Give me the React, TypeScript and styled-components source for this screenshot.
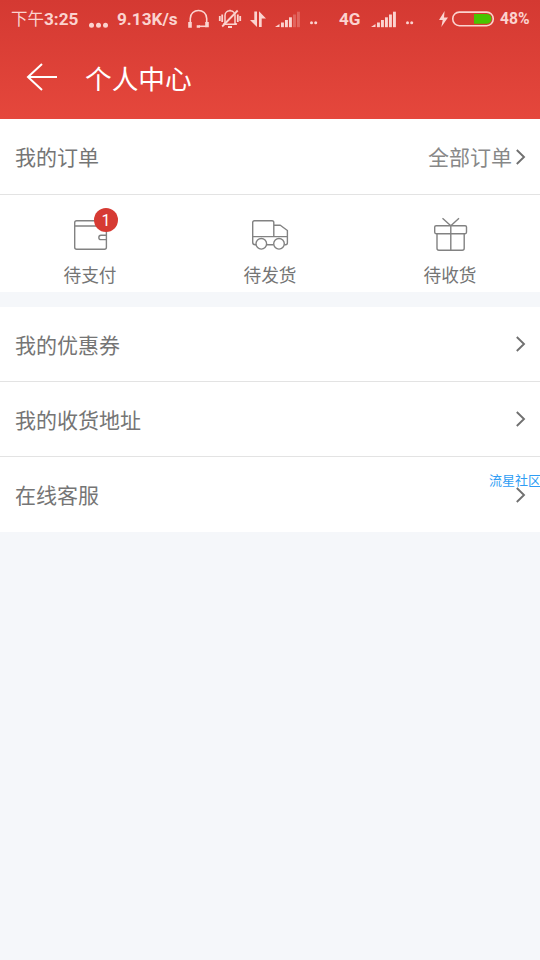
import React from 'react';
import styled, { createGlobalStyle } from 'styled-components';

const GlobalStyle = createGlobalStyle`
  * { box-sizing: border-box; }
  body {
    margin: 0;
    background: #f5f7fa;
    font-family: Roboto, "Noto Sans CJK SC", sans-serif;
    color: #757575;
  }
  svg { display: block; flex: none; overflow: visible; }
`;

const Screen = styled.div`
  width: 540px;
  min-height: 960px;
  display: flex;
  flex-direction: column;
  background: #f5f7fa;
`;

const Header = styled.header`
  height: 119px;
  color: #fff;
  background: linear-gradient(#d43932, #e5473c);
`;

const StatusBar = styled.div`
  height: 38px;
  display: flex;
  align-items: center;
  color: #fbd3cf;
`;

const StatusItem = styled.div<{ $gap: number; $width: number }>`
  flex: none;
  width: ${(p) => p.$width}px;
  margin-left: ${(p) => p.$gap}px;
  white-space: nowrap;
`;

const StatusText = styled(StatusItem)<{ $size: number }>`
  font-size: ${(p) => p.$size}px;
  line-height: 38px;
  font-weight: 700;
`;

const Chinese = styled.span`
  font-size: 16.5px;
  font-weight: 400;
`;

const TitleBar = styled.div`
  height: 81px;
  display: flex;
  align-items: center;
  padding: 0 0 3px 27px;
  gap: 27px;
`;

const Title = styled.h1`
  margin: 0;
  font-size: 26.7px;
  line-height: 38px;
  font-weight: 400;
  padding-top: 5px;
`;

const BackButton = styled.button`
  border: 0;
  padding: 0;
  background: none;
  color: #fff;
`;

const Group = styled.section`
  background: #fff;
`;

const Row = styled.div<{ $height?: number; $last?: boolean }>`
  height: ${(p) => p.$height ?? 75}px;
  display: flex;
  align-items: center;
  justify-content: space-between;
  padding: 0 15px;
  border-bottom: ${(p) => (p.$last ? '0' : '1px solid #e3e3e3')};
  font-size: 21px;
  line-height: 30px;
`;

const RowLabel = styled.span`
  padding-top: 3px;
`;

const RowEnd = styled.div`
  position: relative;
  display: flex;
  align-items: center;
  gap: 4px;
  color: #888;
`;

const Watermark = styled.span`
  position: absolute;
  right: -16px;
  top: -15px;
  font-size: 13px;
  line-height: 18px;
  color: #2f9df4;
  white-space: nowrap;
`;

const OrderTabs = styled.nav`
  height: 97px;
  display: grid;
  grid-template-columns: repeat(3, 1fr);
`;

const OrderTab = styled.div`
  display: flex;
  flex-direction: column;
  align-items: center;
  padding-top: 20px;
  font-size: 17.7px;
  line-height: 24px;
`;

const IconBox = styled.div`
  position: relative;
  width: 40px;
  height: 40px;
  margin-bottom: 9px;
`;

const Badge = styled.span`
  position: absolute;
  left: 24px;
  top: -7px;
  width: 24px;
  height: 24px;
  border-radius: 50%;
  background: #d63a33;
  color: #fff;
  font-size: 16px;
  line-height: 25px;
  text-align: center;
`;

const Spacer = styled.div`
  height: 15px;
`;

const Chevron = () => (
  <svg width="9" height="16" viewBox="0 0 9 16" fill="none" stroke="#707070" strokeWidth="1.9">
    <path d="M0.8 1 8 8 0.8 15" />
  </svg>
);

const Dots = ({ r, step, count, cy }: { r: number; step: number; count: number; cy: number }) => (
  <svg width={step * (count - 1) + r * 2} height="38" fill="currentColor">
    {Array.from({ length: count }, (_, i) => (
      <circle key={i} cx={r + i * step} cy={cy} r={r} />
    ))}
  </svg>
);

const Signal = ({ strength }: { strength: number }) => (
  <svg width="24" height="38" fill="currentColor">
    <path d="M0 27 4.5 24V27Z" />
    {[22.5, 20, 17.3, 14.5, 11.7].map((top, i) => (
      <rect
        key={top}
        x={6 + i * 4}
        y={top}
        width="2.9"
        height={27.2 - top}
        opacity={i + 2 <= strength ? 1 : 0.28}
      />
    ))}
  </svg>
);

const Headphones = () => (
  <svg width="21" height="38" fill="none" stroke="currentColor" strokeWidth="1.6">
    <path d="M2.3 23V18.5C2.3 7.8 18.7 7.8 18.7 18.5V23" />
    <path d="M18.7 26.3H11" />
    <path d="M0.2 22H3.8V27.8H0.2ZM17.2 22H20.8V27.3H17.2ZM8.7 25.2H12V27.8H8.7Z" fill="currentColor" stroke="none" />
  </svg>
);

const MutedBell = () => (
  <svg width="22" height="38" fill="none" stroke="currentColor" strokeWidth="1.5">
    <path d="M5 24.3H17.5M6 23.5V15.5C6 9.3 16 9.3 16 15.5V23.5L18 24.3M4.5 24.3 6 23M11 11V9.8" />
    <path d="M3.2 26.5 18.7 10.5" strokeWidth="1.8" />
    <path d="M0.8 16V21M3.2 14.5V22M18.8 14.5V22M21.2 16V21" strokeWidth="1.8" />
    <path d="M9 27H13" strokeWidth="2" />
  </svg>
);

const DataArrows = () => (
  <svg width="16" height="38" fill="currentColor">
    <path d="M4.3 11.5H7V27L0 20H4.3ZM9 11.3 16 18.4H11.7V27H9Z" />
  </svg>
);

const Bolt = () => (
  <svg width="9" height="38" fill="currentColor">
    <path d="M5.6 11 0 20H3.7L2.3 27 9 17.6H5Z" />
  </svg>
);

const Battery = () => (
  <svg width="42" height="38">
    <rect x="0.8" y="12.1" width="40.4" height="13.6" rx="6.5" fill="none" stroke="currentColor" strokeWidth="1.6" />
    <path d="M22 14.1H35C41 14.1 41 23.7 35 23.7H22Z" fill="#49c400" />
  </svg>
);

const lineIcon = {
  width: 40,
  height: 40,
  fill: 'none',
  stroke: '#828282',
  strokeWidth: 1.4,
  strokeLinejoin: 'round' as const,
};

const Wallet = () => (
  <svg {...lineIcon}>
    <rect x="4.7" y="5.7" width="31.7" height="28.5" rx="2" />
    <path d="M4.7 11H36.4M36.4 20.2H31C28.1 20.2 28.1 24.6 31 24.6H36.4" />
  </svg>
);

const Truck = () => (
  <svg {...lineIcon}>
    <path d="M7 29.8H5.2C3.5 29.8 2.7 29 2.7 27.3V7.5C2.7 6.3 3.3 5.7 4.5 5.7H22C23.2 5.7 23.8 6.3 23.8 7.5V21.6M23.8 10.3H30.3L37.4 15.5V27.8C37.4 29 36.8 29.8 35.5 29.8H34.3M16.4 29.8H23.6M2.7 21.6H37.4" />
    <circle cx="11.3" cy="28.8" r="5.3" fill="#fff" />
    <circle cx="29" cy="28.8" r="5.3" fill="#fff" />
  </svg>
);

const Gift = () => (
  <svg {...lineIcon}>
    <rect x="4.7" y="10.7" width="31.8" height="8" rx="1.4" />
    <path d="M7 18.7V33.2C7 34.4 7.7 35.2 9 35.2H32.2C33.5 35.2 34.2 34.4 34.2 33.2V18.7M20.8 10.7V35.2M12.5 3.2 20.8 10.7 29 3.2" />
  </svg>
);

const orders = [
  { label: '待支付', icon: <Wallet />, count: 1 },
  { label: '待发货', icon: <Truck /> },
  { label: '待收货', icon: <Gift /> },
];

const links = [
  { label: '我的优惠券' },
  { label: '我的收货地址' },
  { label: '在线客服', mark: '流星社区' },
];

export default function App() {
  return (
    <Screen>
      <GlobalStyle />
      <Header>
        <StatusBar>
          <StatusText $gap={11} $width={68} $size={17.2}><Chinese>下午</Chinese>3:25</StatusText>
          <StatusItem $gap={10} $width={19}><Dots r={2.5} step={7} count={3} cy={25.2} /></StatusItem>
          <StatusText $gap={9} $width={62} $size={17.2}>9.13K/s</StatusText>
          <StatusItem $gap={9} $width={21}><Headphones /></StatusItem>
          <StatusItem $gap={10} $width={22}><MutedBell /></StatusItem>
          <StatusItem $gap={9} $width={16}><DataArrows /></StatusItem>
          <StatusItem $gap={9} $width={24}><Signal strength={4} /></StatusItem>
          <StatusItem $gap={11} $width={8}><Dots r={1.5} step={4.2} count={2} cy={22.7} /></StatusItem>
          <StatusText $gap={21} $width={23} $size={17.2}>4G</StatusText>
          <StatusItem $gap={9} $width={24}><Signal strength={6} /></StatusItem>
          <StatusItem $gap={11} $width={8}><Dots r={1.5} step={4.2} count={2} cy={22.7} /></StatusItem>
          <StatusItem $gap={25} $width={9}><Bolt /></StatusItem>
          <StatusItem $gap={4} $width={42}><Battery /></StatusItem>
          <StatusText $gap={6} $width={31} $size={15.7}>48%</StatusText>
        </StatusBar>
        <TitleBar>
          <BackButton aria-label="返回">
            <svg width="31" height="28" fill="none" stroke="currentColor" strokeWidth="2">
              <path d="M30 14H1M15 1 1 14 15 27" />
            </svg>
          </BackButton>
          <Title>个人中心</Title>
        </TitleBar>
      </Header>

      <Group>
        <Row $height={76}>
          <RowLabel>我的订单</RowLabel>
          <RowEnd><RowLabel>全部订单</RowLabel><Chevron /></RowEnd>
        </Row>
        <OrderTabs>
          {orders.map((o) => (
            <OrderTab key={o.label}>
              <IconBox>
                {o.icon}
                {o.count && <Badge>{o.count}</Badge>}
              </IconBox>
              {o.label}
            </OrderTab>
          ))}
        </OrderTabs>
      </Group>
      <Spacer />
      <Group>
        {links.map((l, i) => (
          <Row key={l.label} $last={i === links.length - 1}>
            <RowLabel>{l.label}</RowLabel>
            <RowEnd>
              <Chevron />
              {l.mark && <Watermark>{l.mark}</Watermark>}
            </RowEnd>
          </Row>
        ))}
      </Group>
    </Screen>
  );
}
